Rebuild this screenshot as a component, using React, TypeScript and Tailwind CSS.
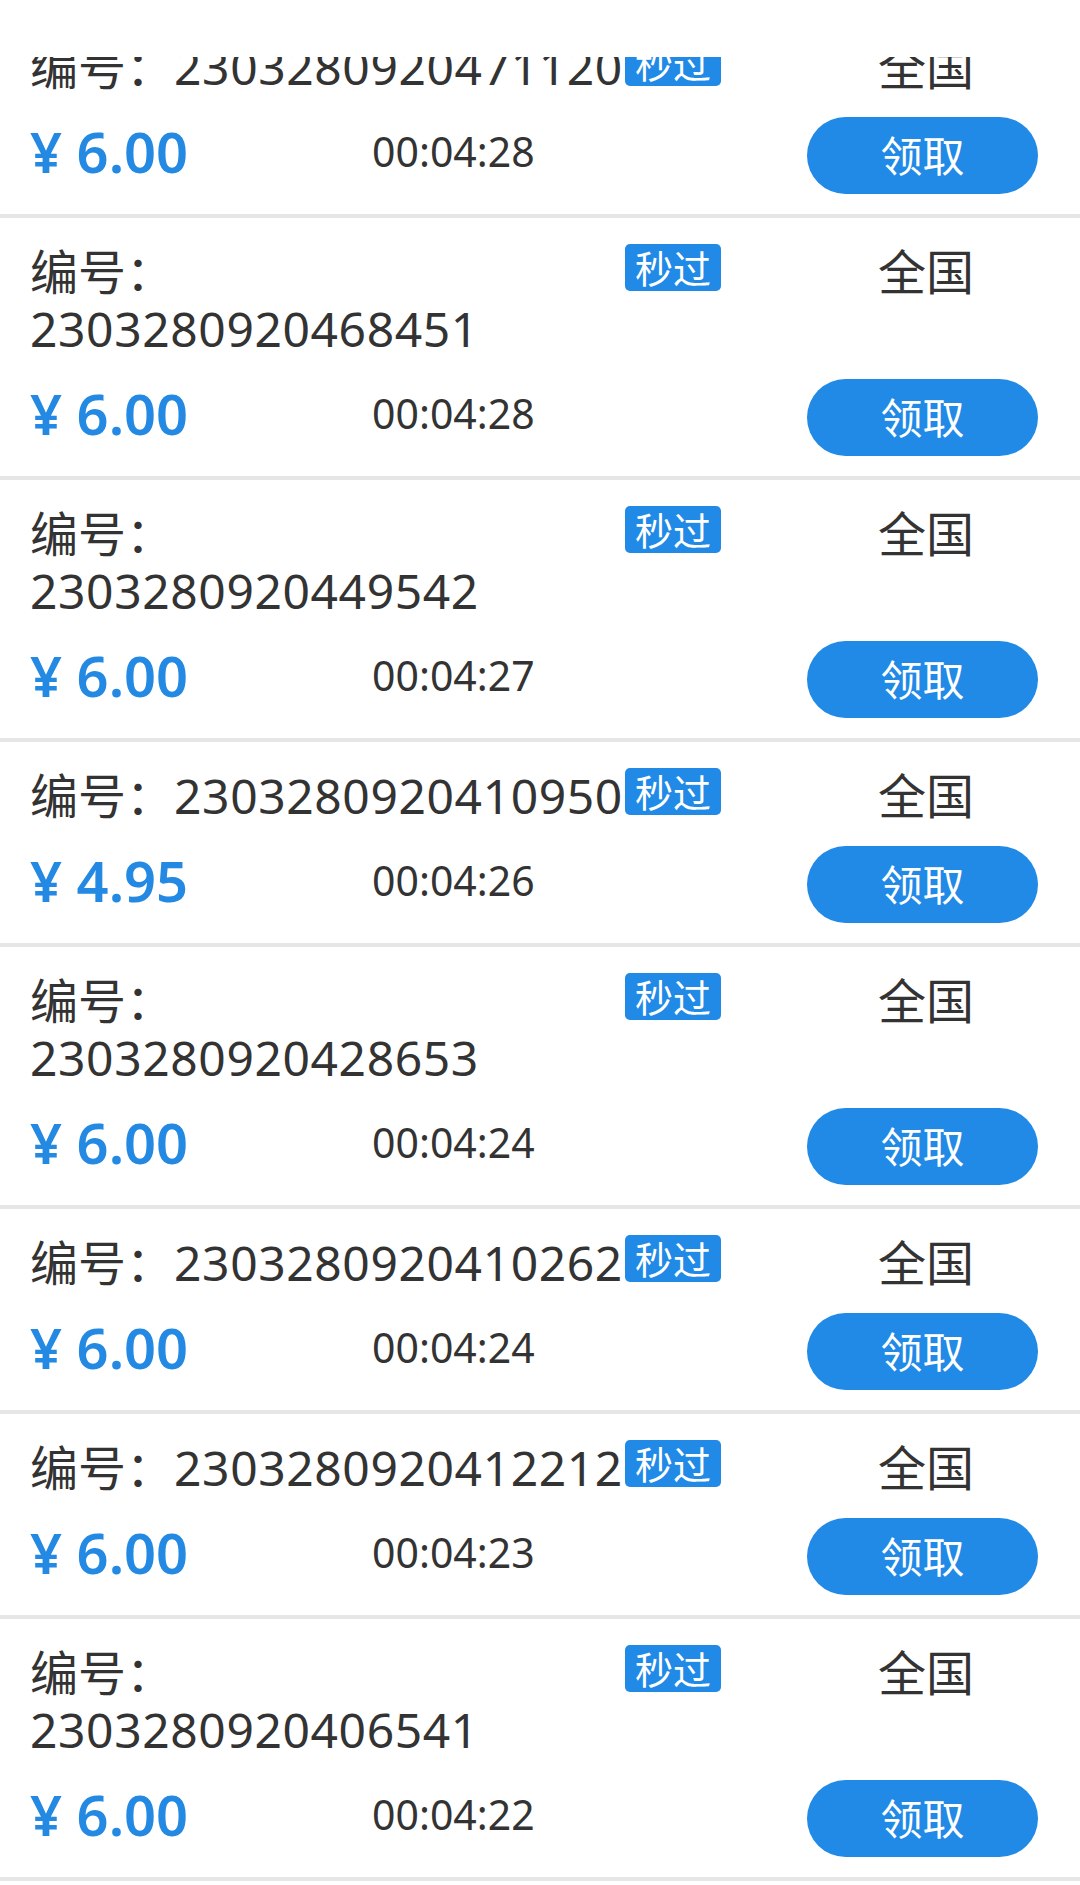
import React from "react";

type Item = { no: string; price: string; time: string; wrap: boolean };

const items: Item[] = [
  { no: "2303280920471120", price: "6.00", time: "00:04:28", wrap: false },
  { no: "2303280920468451", price: "6.00", time: "00:04:28", wrap: true },
  { no: "2303280920449542", price: "6.00", time: "00:04:27", wrap: true },
  { no: "2303280920410950", price: "4.95", time: "00:04:26", wrap: false },
  { no: "2303280920428653", price: "6.00", time: "00:04:24", wrap: true },
  { no: "2303280920410262", price: "6.00", time: "00:04:24", wrap: false },
  { no: "2303280920412212", price: "6.00", time: "00:04:23", wrap: false },
  { no: "2303280920406541", price: "6.00", time: "00:04:22", wrap: true },
];

function Card({ item, first }: { item: Item; first: boolean }) {
  return (
    <div className={first ? "-mt-[44px]" : ""}>
      <div className="bg-white pt-[25px] pb-[20px] pl-[30px] pr-[42px] grid grid-cols-[595px_96px_1fr_231px]">
        <div className="text-[48px] leading-[57px] text-[#333333]">
          <span>编号：</span>
          {item.wrap ? <br /> : null}
          <span className="tracking-[0.6px]">{item.no}</span>
        </div>
        <div className="self-start mt-[1px] h-[47px] rounded-[5px] bg-[#2189e6] flex items-center justify-center text-white text-[38px] leading-none">
          秒过
        </div>
        <div />
        <div className="pl-[7px] text-center text-[48px] leading-[57px] text-[#333333]">全国</div>

        <div className="col-span-3 mt-[22px] h-[77px] flex items-center">
          <div className="w-[342px] mb-[10px] text-[56px] leading-none font-semibold text-[#2389e2]">
            ¥ {item.price}
          </div>
          <div className="mb-[8px] text-[41px] leading-none text-[#333333]">{item.time}</div>
        </div>
        <div className="mt-[22px] h-[77px] rounded-full bg-[#2189e6] flex items-center justify-center text-white text-[42px] leading-none">
          领取
        </div>
      </div>
      <div className="h-[4px] bg-[#e6e6e6]" />
    </div>
  );
}

export default function App() {
  return (
    <div className="w-[1080px] h-[1885px] bg-white flex flex-col overflow-hidden font-['Noto_Sans','Noto_Sans_CJK_SC',sans-serif]">
      <div className="h-[57px] shrink-0 bg-white relative z-10" />
      <div className="flex-1 overflow-hidden">
        {items.map((it, i) => (
          <Card key={i} item={it} first={i === 0} />
        ))}
      </div>
    </div>
  );
}
